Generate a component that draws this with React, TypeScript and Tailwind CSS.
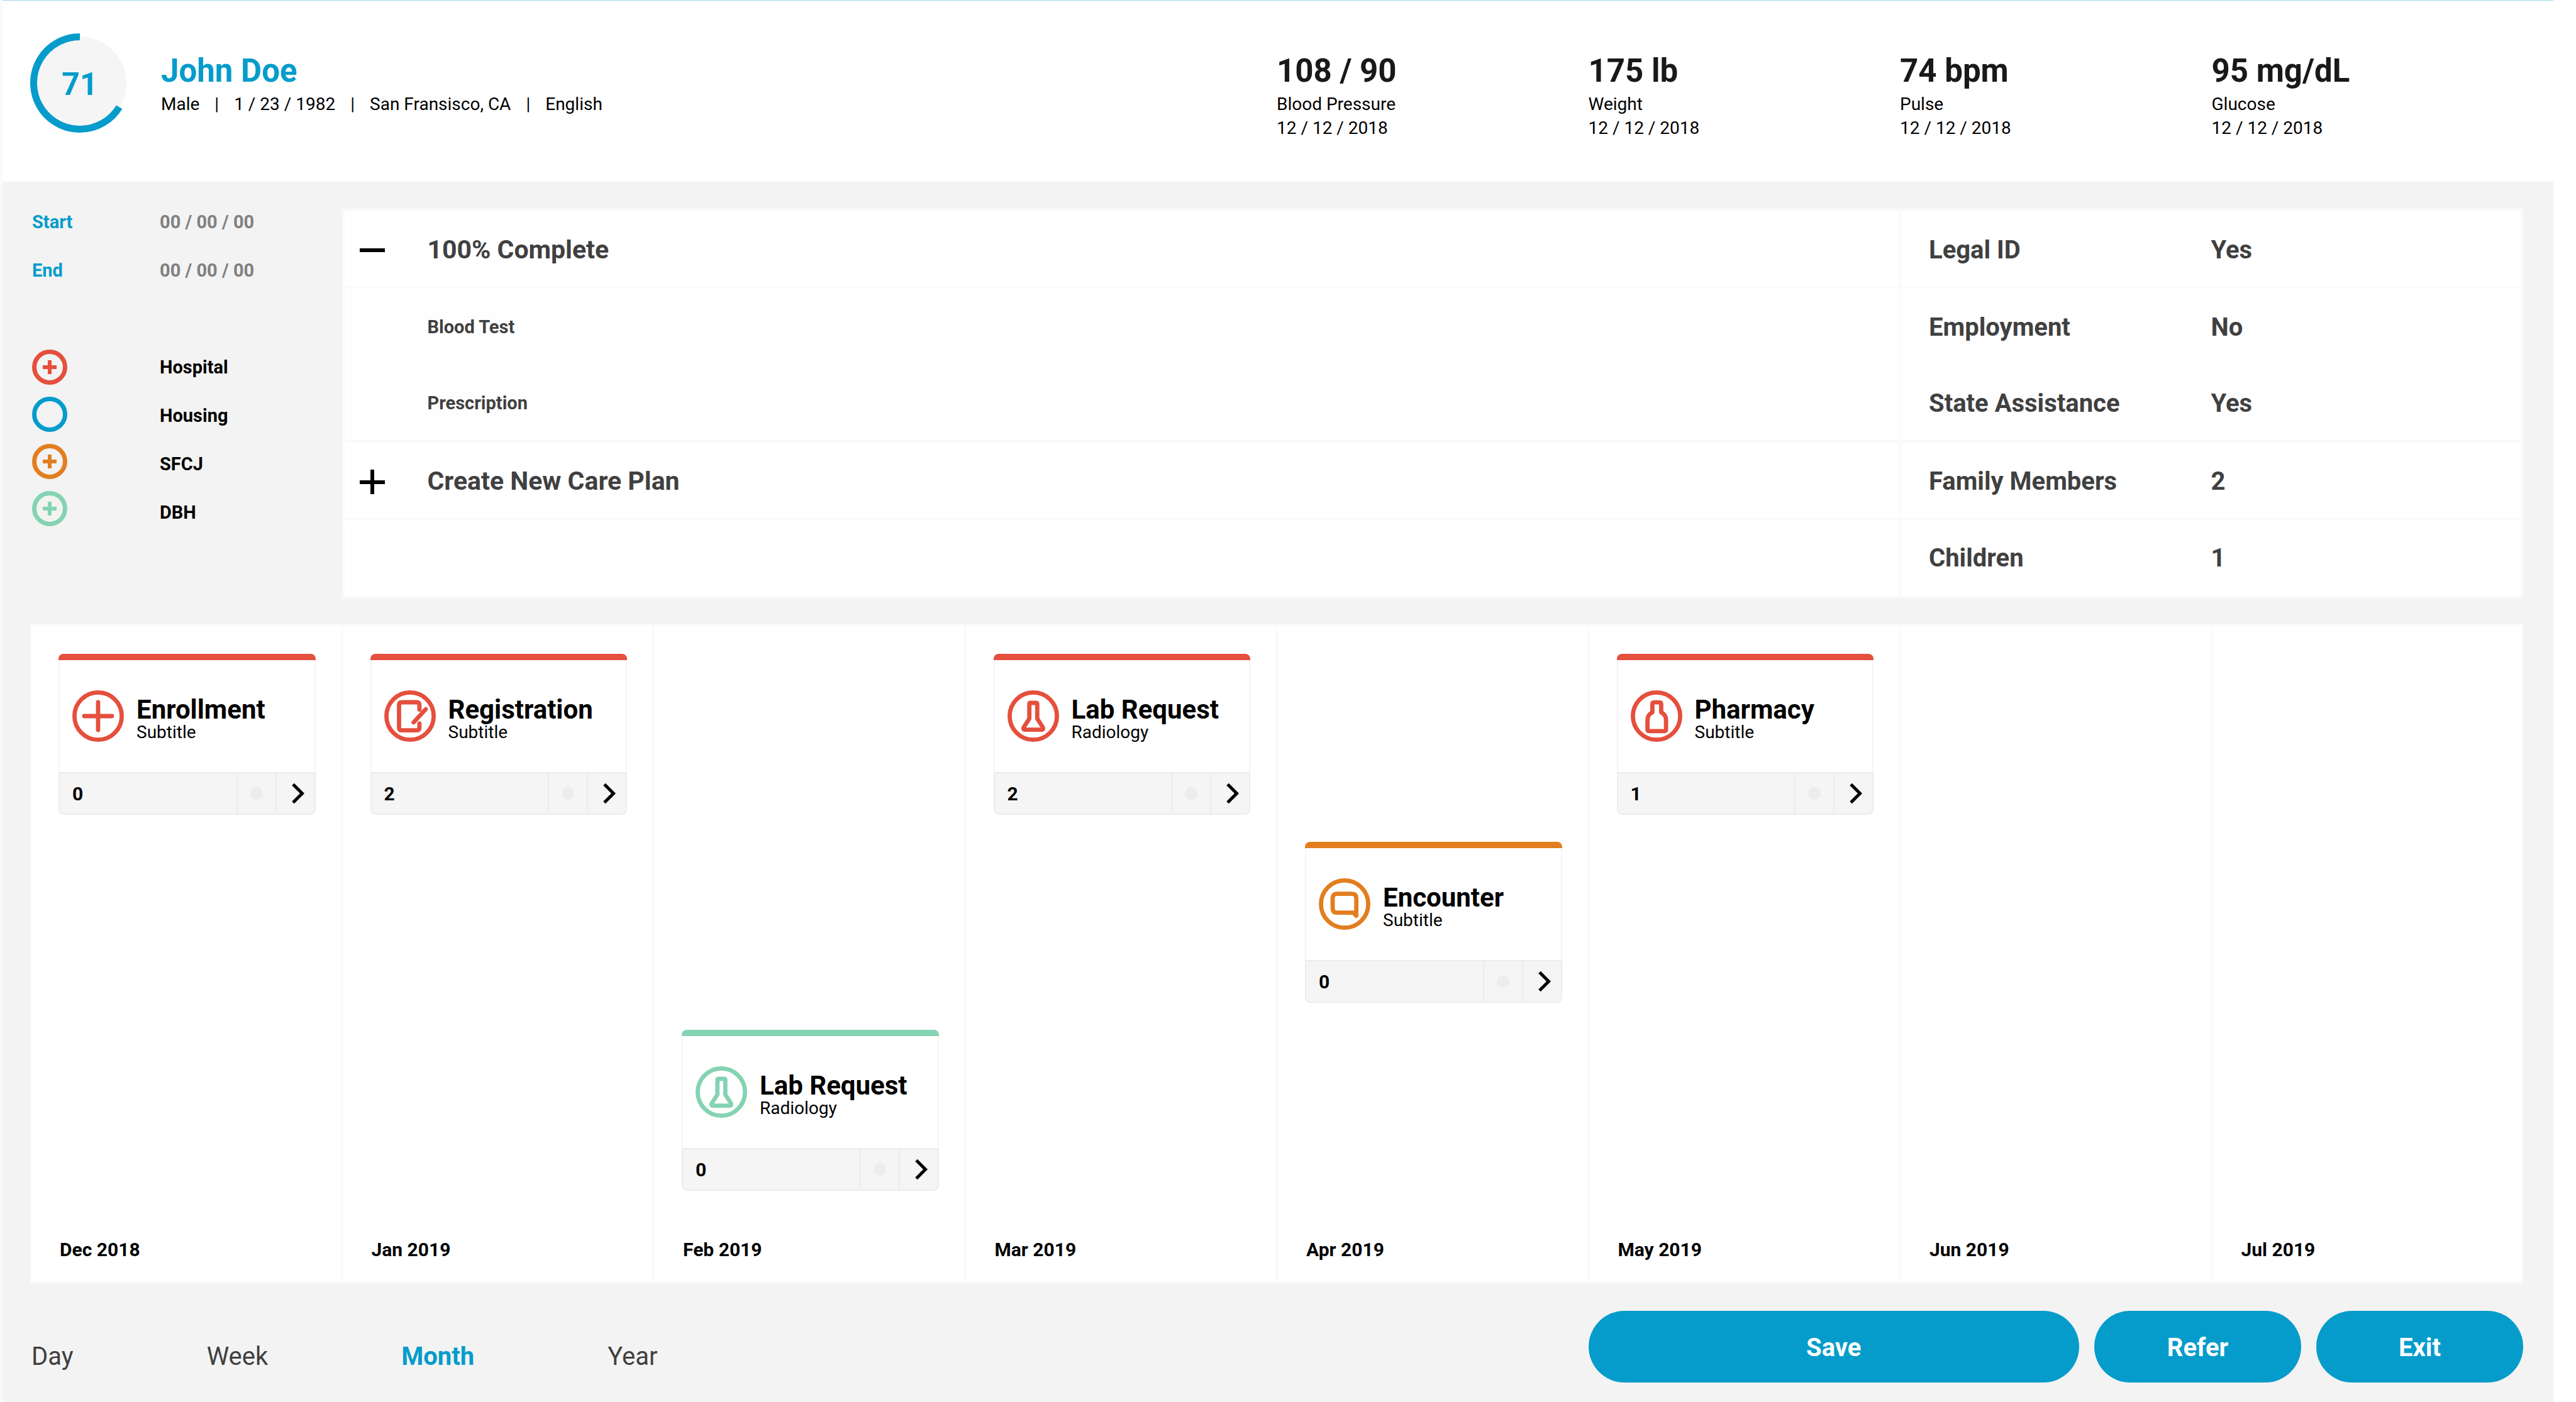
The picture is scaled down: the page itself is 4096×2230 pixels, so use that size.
import type { ReactNode } from "react";

type IconName = "plus" | "form" | "flask" | "bottle" | "chat";
type Tone = "red" | "orange" | "green";

const toneText: Record<Tone, string> = {
  red: "text-[#e54f3d]",
  orange: "text-[#e27e1f]",
  green: "text-[#84d3b2]",
};

const toneBar: Record<Tone, string> = {
  red: "bg-[#e54f3d]",
  orange: "bg-[#e27e1f]",
  green: "bg-[#84d3b2]",
};

const iconShapes: Record<IconName, ReactNode> = {
  plus: <path d="M41 19V63M19 41H63" />,
  form: (
    <>
      <path d="M55.9 30.5V23.5Q55.9 19 51.4 19H28Q23.5 19 23.5 23.5V59.2Q23.5 63.7 28 63.7H51.4Q55.9 63.7 55.9 59.2V53" />
      <path d="M66 30L46.7 51" />
    </>
  ),
  flask: (
    <path d="M34.7 22Q34.7 20 36.7 20H45.3Q47.3 20 47.3 22V45L56 58.5Q58 62.7 53.5 62.7H28.5Q24 62.7 26 58.5L34.7 45Z" />
  ),
  bottle: (
    <path d="M34.4 22Q34.4 19.2 37.2 19.2H45.6Q48.4 19.2 48.4 22V35C53 37.5 56.1 41 56.1 47V62Q56.1 64.8 53.3 64.8H29.4Q26.6 64.8 26.6 62V47C26.6 41 29.5 37.5 34.4 35Z" />
  ),
  chat: (
    <path d="M59.6 59.6V31.6Q59.6 24.6 52.6 24.6H29Q22 24.6 22 31.6V47.7Q22 54.7 29 54.7H55Z" />
  ),
};

function CareIcon({ name, tone }: { name: IconName; tone: Tone }) {
  return (
    <svg
      viewBox="0 0 82 82"
      className={`size-[82px] shrink-0 ${toneText[tone]}`}
      fill="none"
      stroke="currentColor"
      strokeWidth="6.8"
      strokeLinecap="round"
      strokeLinejoin="round"
      aria-hidden="true"
    >
      <circle cx="41" cy="41" r="37.6" />
      {iconShapes[name]}
    </svg>
  );
}

const rowStart = ["row-start-1", "row-start-2", "row-start-3"];

interface Card {
  title: string;
  subtitle: string;
  count: number;
  icon: IconName;
  tone: Tone;
  slot: number;
}

const months: { label: string; card?: Card }[] = [
  { label: "Dec 2018", card: { title: "Enrollment", subtitle: "Subtitle", count: 0, icon: "plus", tone: "red", slot: 0 } },
  { label: "Jan 2019", card: { title: "Registration", subtitle: "Subtitle", count: 2, icon: "form", tone: "red", slot: 0 } },
  { label: "Feb 2019", card: { title: "Lab Request", subtitle: "Radiology", count: 0, icon: "flask", tone: "green", slot: 2 } },
  { label: "Mar 2019", card: { title: "Lab Request", subtitle: "Radiology", count: 2, icon: "flask", tone: "red", slot: 0 } },
  { label: "Apr 2019", card: { title: "Encounter", subtitle: "Subtitle", count: 0, icon: "chat", tone: "orange", slot: 1 } },
  { label: "May 2019", card: { title: "Pharmacy", subtitle: "Subtitle", count: 1, icon: "bottle", tone: "red", slot: 0 } },
  { label: "Jun 2019" },
  { label: "Jul 2019" },
];

function TimelineCard({ card }: { card: Card }) {
  return (
    <article className={`flex flex-col overflow-hidden rounded-lg ${rowStart[card.slot]}`}>
      <div className={`h-[10px] ${toneBar[card.tone]}`} />
      <div className="flex flex-1 items-center gap-5 border-x-2 border-[#f5f5f5] pl-5">
        <CareIcon name={card.icon} tone={card.tone} />
        <div className="pt-3 text-black">
          <h3 className="text-[42px] leading-[40px] font-bold">{card.title}</h3>
          <p className="text-[28px] leading-[32px]">{card.subtitle}</p>
        </div>
      </div>
      <div className="flex h-[68px] rounded-b-lg border-2 border-[#ececec] bg-[#f5f5f5]">
        <div className="flex flex-1 items-center pl-5 text-[30px] font-bold text-black">{card.count}</div>
        <div className="flex w-[62px] items-center justify-center border-l-2 border-[#ececec]">
          <span className="size-5 rounded-full bg-[#ececec]" />
        </div>
        <button type="button" aria-label={`Open ${card.title}`} className="flex w-[62px] items-center justify-center border-l-2 border-[#ececec] pl-2">
          <svg viewBox="0 0 24 34" className="h-[34px] w-6" fill="none" stroke="#000" strokeWidth="5" aria-hidden="true">
            <path d="M4 2.5L18.5 17L4 31.5" />
          </svg>
        </button>
      </div>
    </article>
  );
}

const vitals = [
  { value: "108 / 90", label: "Blood Pressure" },
  { value: "175 lb", label: "Weight" },
  { value: "74 bpm", label: "Pulse" },
  { value: "95 mg/dL", label: "Glucose" },
];

const profile = ["Male", "1 / 23 / 1982", "San Fransisco, CA", "English"];

function ScoreRing() {
  return (
    <div className="relative flex size-[158px] shrink-0 items-center justify-center">
      <svg viewBox="0 0 158 158" className="absolute inset-0 size-full" fill="none" aria-hidden="true">
        <circle cx="79" cy="79" r="74" fill="#f5f5f5" />
        <path d="M79 5.5A73.5 73.5 0 1 0 141.7 117.3" stroke="#059ccb" strokeWidth="11" />
      </svg>
      <span className="relative pt-1 text-[50px] leading-[60px] font-bold text-[#059ccb]">71</span>
    </div>
  );
}

function Header() {
  return (
    <header className="grid h-[289px] grid-cols-8 border-t border-[#9fd9ea] bg-white pt-[52px] pr-12 pl-[44px]">
      <div className="col-span-4 flex gap-[50px]">
        <ScoreRing />
        <div className="pt-[26px]">
          <h1 className="text-[51px] leading-[68px] font-bold text-[#059ccb]">John Doe</h1>
          <p className="flex gap-6 text-[28px] leading-[38px] text-black">
            {profile.map((item, i) => (
              <span key={item} className="flex gap-6">
                {i > 0 && <span>|</span>}
                <span>{item}</span>
              </span>
            ))}
          </p>
        </div>
      </div>
      {vitals.map((v) => (
        <div key={v.label} className="pt-[26px] text-[28px] leading-[38px] text-black">
          <p className="text-[51px] leading-[68px] font-bold text-[#191919]">{v.value}</p>
          <p>{v.label}</p>
          <p>12 / 12 / 2018</p>
        </div>
      ))}
    </header>
  );
}

const legend = [
  { label: "Hospital", color: "text-[#e54f3d]", plus: true },
  { label: "Housing", color: "text-[#059ccb]", plus: false },
  { label: "SFCJ", color: "text-[#e27e1f]", plus: true },
  { label: "DBH", color: "text-[#84d3b2]", plus: true },
];

function Sidebar() {
  return (
    <aside className="text-[29px] font-bold">
      <div className="flex flex-col gap-[33px]">
        {["Start", "End"].map((name) => (
          <div key={name} className="flex h-11 items-center">
            <label htmlFor={name} className="w-[206px] pl-[3px] text-[#059ccb]">{name}</label>
            <input id={name} type="text" defaultValue="00 / 00 / 00" className="w-[200px] bg-transparent text-[#808080]" />
          </div>
        ))}
      </div>
      <div className="mt-[103px] flex items-start">
        <div className="flex w-[206px] flex-col gap-[19px] pl-[3px]">
          {legend.map((l) => (
            <svg key={l.label} viewBox="0 0 56 56" className={`size-14 ${l.color}`} fill="none" stroke="currentColor" aria-hidden="true">
              <circle cx="28" cy="28" r="24.5" strokeWidth="7" />
              {l.plus && <path d="M28 17V39M17 28H39" strokeWidth="6" />}
            </svg>
          ))}
        </div>
        <ul className="flex flex-col gap-[33px] pt-[7px] text-black">
          {legend.map((l) => (
            <li key={l.label} className="flex h-11 items-center">{l.label}</li>
          ))}
        </ul>
      </div>
    </aside>
  );
}

const details = [
  { label: "Legal ID", value: "Yes" },
  { label: "Employment", value: "No" },
  { label: "State Assistance", value: "Yes" },
  { label: "Family Members", value: "2" },
  { label: "Children", value: "1" },
];

const rowFrame = [
  "h-[122px] border-b-2 bg-white pt-1",
  "h-[121px] bg-[#fefefe] pt-1",
  "h-[121px] bg-[#fefefe] pt-1",
  "h-[124px] border-t-4 bg-white pt-1",
  "h-[124px] border-t-4 bg-white",
];

function CarePlans() {
  return (
    <section className="col-span-5 border-y-4 border-r-2 border-l-4 border-[#fafafa] text-[#404040]">
      <button type="button" aria-expanded="true" className={`flex w-full items-center border-[#fafafa] pl-6 text-left text-[41px] font-bold ${rowFrame[0]}`}>
        <svg viewBox="0 0 40 40" className="mr-[68px] size-10" stroke="#000" strokeWidth="6" aria-hidden="true">
          <path d="M0 20H40" />
        </svg>
        100% Complete
      </button>
      <ul className="text-[29px] font-bold">
        <li className={`flex items-center pl-[132px] ${rowFrame[1]}`}>Blood Test</li>
        <li className={`flex items-center pl-[132px] ${rowFrame[2]}`}>Prescription</li>
      </ul>
      <button type="button" className={`flex w-full items-center border-[#fafafa] pl-6 text-left text-[41px] font-bold ${rowFrame[3]}`}>
        <svg viewBox="0 0 40 40" className="mr-[68px] size-10" stroke="#000" strokeWidth="6" aria-hidden="true">
          <path d="M0 21H40M20 1V40" />
        </svg>
        Create New Care Plan
      </button>
      <div className={`border-[#fafafa] ${rowFrame[4]}`} />
    </section>
  );
}

function Details() {
  return (
    <dl className="col-span-2 border-y-4 border-r-4 border-l-2 border-[#fafafa] text-[40px] font-bold text-[#404040]">
      {details.map((d, i) => (
        <div key={d.label} className={`grid grid-cols-2 items-center border-[#fafafa] ${rowFrame[i]}`}>
          <dt className="pl-11">{d.label}</dt>
          <dd>{d.value}</dd>
        </div>
      ))}
    </dl>
  );
}

function Timeline() {
  return (
    <section className="mt-10 grid flex-1 grid-cols-8 border-y-2 border-[#fafafa] bg-white">
      {months.map((m) => (
        <div key={m.label} className="flex flex-col justify-between border-2 border-[#fafafa] pt-11 pr-10 pb-[30px] pl-[43px]">
          <div className="grid auto-rows-[256px] gap-[43px]">{m.card && <TimelineCard card={m.card} />}</div>
          <h2 className="pl-[2px] text-[30px] leading-[40px] font-bold text-black">{m.label}</h2>
        </div>
      ))}
    </section>
  );
}

const ranges = ["Day", "Week", "Month", "Year"];

function Footer() {
  return (
    <footer className="flex items-center pt-[43px] pb-[31px] text-[40px]">
      <nav className="flex flex-1 gap-[212px] pt-8 pl-[2px]">
        {ranges.map((r) => (
          <button key={r} type="button" className={r === "Month" ? "font-bold text-[#059ccb]" : "text-[#404040]"}>
            {r}
          </button>
        ))}
      </nav>
      <div className="flex w-3/8 gap-6 font-bold text-white">
        <button type="button" className="h-[114px] flex-1 rounded-full bg-[#059ccb] pt-1">Save</button>
        <button type="button" className="h-[114px] w-[329px] rounded-full bg-[#059ccb] pt-1">Refer</button>
        <button type="button" className="h-[114px] w-[329px] rounded-full bg-[#059ccb] pt-1">Exit</button>
      </div>
    </footer>
  );
}

export default function App() {
  return (
    <div className="flex min-h-screen bg-white pr-9 font-['Roboto',sans-serif]">
      <div className="flex flex-1 flex-col border-l-4 border-[#fafafa] bg-[#f3f3f3]">
        <Header />
        <main className="flex flex-1 flex-col pt-[43px] pr-12 pl-[44px]">
          <div className="grid grid-cols-8">
            <Sidebar />
            <CarePlans />
            <Details />
          </div>
          <Timeline />
          <Footer />
        </main>
      </div>
    </div>
  );
}
